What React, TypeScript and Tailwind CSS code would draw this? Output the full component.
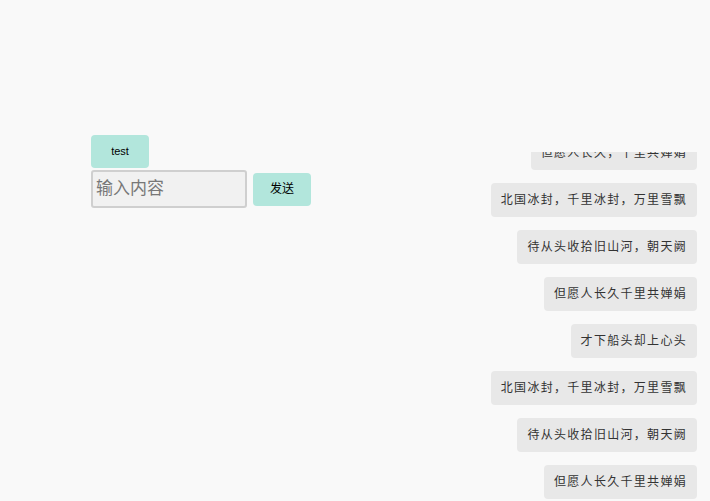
export default function App() {
  const items = [
    "但愿人长久，千里共婵娟",
    "北国冰封，千里冰封，万里雪飘",
    "待从头收拾旧山河，朝天阙",
    "但愿人长久千里共婵娟",
    "才下船头却上心头",
    "北国冰封，千里冰封，万里雪飘",
    "待从头收拾旧山河，朝天阙",
    "但愿人长久千里共婵娟",
  ];
  return (
    <div className="flex h-[501px] w-[710px] overflow-hidden bg-[#f9f9f9]" style={{ fontFamily: '"Liberation Sans", "Noto Sans CJK SC", sans-serif' }}>
      <div className="flex w-[330px] shrink-0 flex-col items-start pl-[91px] pt-[135px]">
        <button className="h-[33px] w-[58px] rounded-[4px] bg-[#b2e6dc] text-[11px] text-black">test</button>
        <div className="mt-[2px] flex items-center gap-[6px]">
          <input placeholder="输入内容" className="h-[38px] w-[156px] rounded-[3px] border-2 border-[#cfcfcf] bg-[#f1f1f1] px-[3px] text-[17px] text-[#333] placeholder:text-[#777] outline-none" />
          <button className="h-[33px] w-[58px] rounded-[4px] bg-[#b2e6dc] text-[12px] text-black">发送</button>
        </div>
      </div>
      <div className="mt-[152px] mb-[2px] flex h-[347px] flex-1 flex-col items-end justify-end gap-[13px] overflow-hidden pr-[13px]">
        {items.map((t, i) => (
          <div key={i} className="flex h-[34px] shrink-0 items-center rounded-[4px] bg-[#e8e8e8] px-[10px] text-[12px] tracking-[1.3px] text-[#333]">
            {t}
          </div>
        ))}
      </div>
    </div>
  );
}
